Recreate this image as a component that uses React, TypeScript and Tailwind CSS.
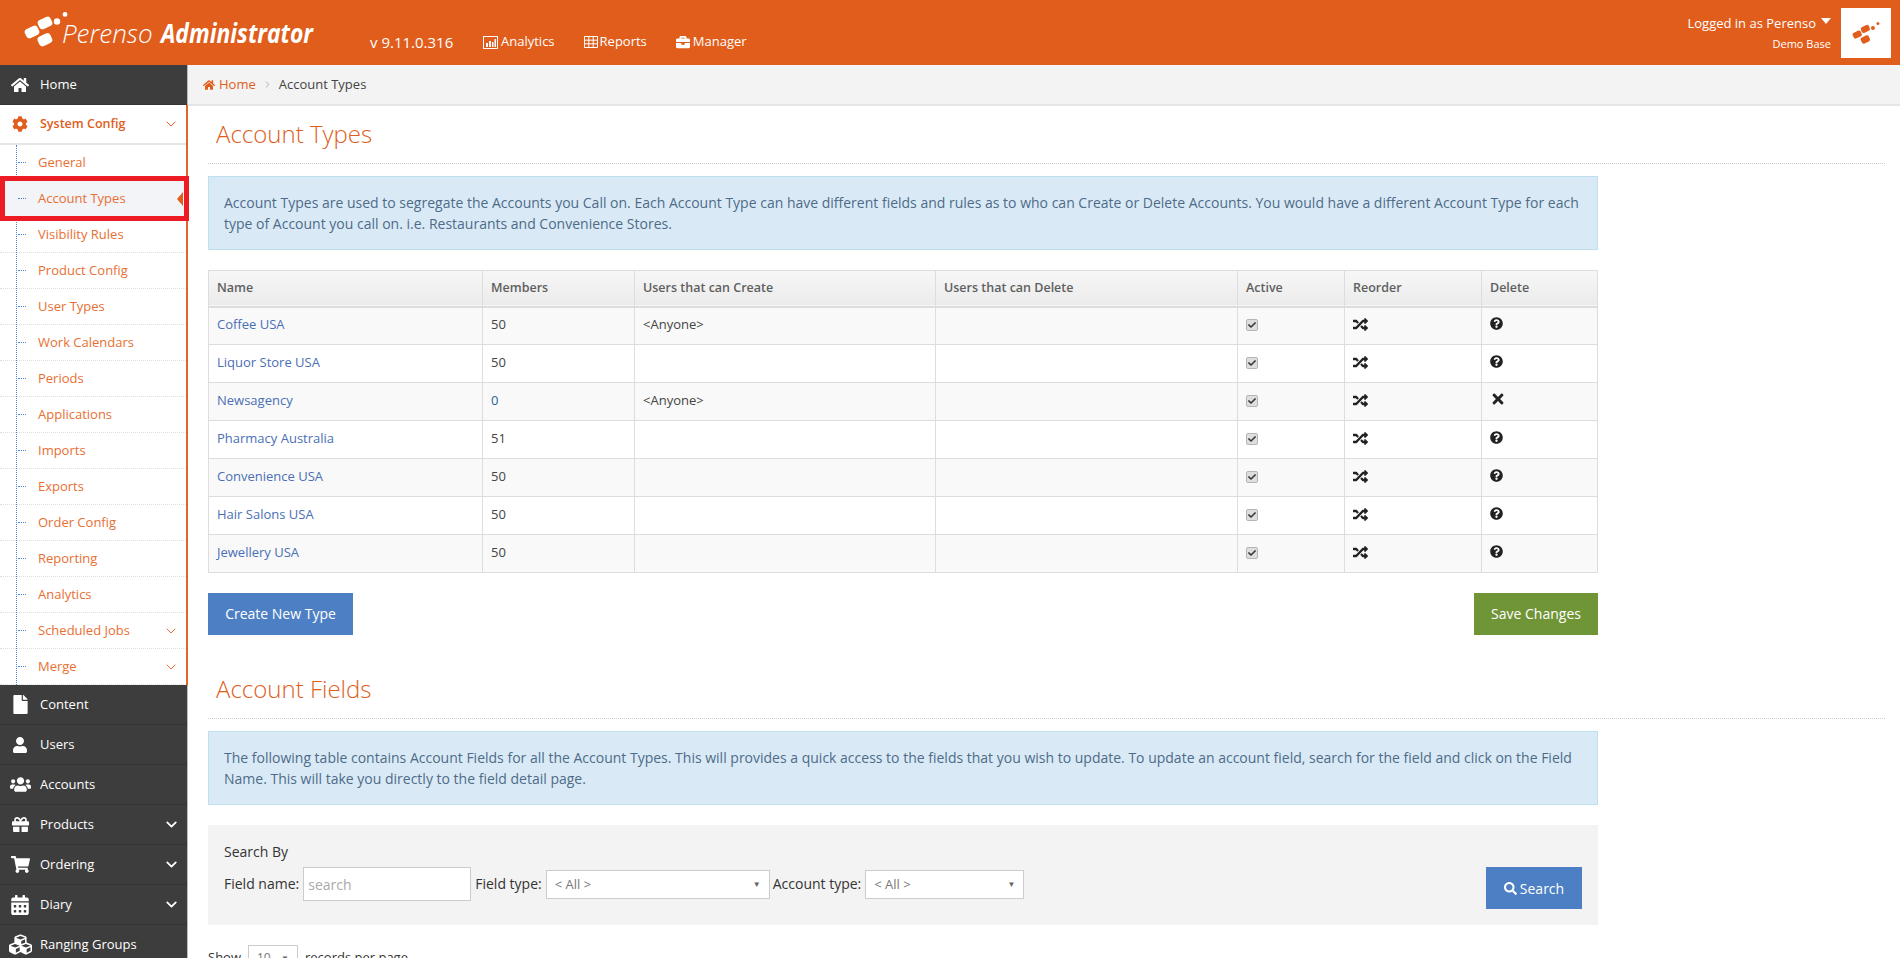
import { ChevronDown, ChevronRight } from "lucide-react";
import {
	FaBriefcase,
	FaCalendarAlt,
	FaCheck,
	FaCog,
	FaCubes,
	FaFile,
	FaGift,
	FaHome,
	FaQuestionCircle,
	FaRandom,
	FaSearch,
	FaShoppingCart,
	FaTimes,
	FaUser,
	FaUsers,
} from "react-icons/fa";

const subItems = [
	"General",
	"Account Types",
	"Visibility Rules",
	"Product Config",
	"User Types",
	"Work Calendars",
	"Periods",
	"Applications",
	"Imports",
	"Exports",
	"Order Config",
	"Reporting",
	"Analytics",
	"Scheduled Jobs",
	"Merge",
];

const darkItems = [
	{ label: "Content", icon: <FaFile size={19} />, more: false },
	{ label: "Users", icon: <FaUser size={16} />, more: false },
	{ label: "Accounts", icon: <FaUsers size={21} />, more: false },
	{ label: "Products", icon: <FaGift size={17} />, more: true },
	{ label: "Ordering", icon: <FaShoppingCart size={19} />, more: true },
	{ label: "Diary", icon: <FaCalendarAlt size={20} />, more: true },
	{ label: "Ranging Groups", icon: <FaCubes size={23} />, more: false },
];

const rows = [
	{ name: "Coffee USA", members: "50", create: "<Anyone>", canDelete: false },
	{ name: "Liquor Store USA", members: "50", create: "", canDelete: false },
	{ name: "Newsagency", members: "0", create: "<Anyone>", canDelete: true },
	{ name: "Pharmacy Australia", members: "51", create: "", canDelete: false },
	{ name: "Convenience USA", members: "50", create: "", canDelete: false },
	{ name: "Hair Salons USA", members: "50", create: "", canDelete: false },
	{ name: "Jewellery USA", members: "50", create: "", canDelete: false },
];

function LogoMark({ className }: { className: string }) {
	return (
		<svg viewBox="0 0 44 35" className={className} fill="currentColor">
			<rect x="1" y="15" width="14" height="10" rx="3.5" transform="rotate(-25 8 20)" />
			<rect x="14" y="6" width="14" height="10" rx="3.5" transform="rotate(-25 21 11)" />
			<rect x="14" y="22.5" width="14" height="10.5" rx="3.5" transform="rotate(-25 21 28)" />
			<circle cx="33" cy="9.5" r="3.2" />
			<circle cx="41" cy="2.4" r="2.4" />
		</svg>
	);
}

function ChartIcon() {
	return (
		<svg viewBox="0 0 15 13" className="h-[13px] w-[15px]" fill="none">
			<rect x="0.5" y="0.5" width="14" height="12" stroke="currentColor" />
			<path d="M3 7h2v4H3zM6 5h2v6H6zM9 6h1.5v5H9zM11.5 3H13v8h-1.5z" fill="currentColor" />
		</svg>
	);
}

function GridIcon() {
	return (
		<svg viewBox="0 0 14 12" className="h-[12px] w-[14px]" fill="none" stroke="currentColor">
			<path d="M.5.5h13v11H.5zM.5 4.2h13M.5 7.8h13M4.8.5v11M9.2.5v11" />
		</svg>
	);
}

function Select({ label, width }: { label: string; width: string }) {
	return (
		<div className={`flex h-[29px] items-center justify-between border border-[#ccc] bg-white pl-2 pr-2 text-[13px] text-[#777] ${width}`}>
			<span className="mt-[2px]">{label}</span>
			<span className="text-[8px] text-[#666]">▼</span>
		</div>
	);
}

function Header() {
	return (
		<header className="flex h-[65px] items-center bg-[#e05d1c] pl-6 pr-[9px] text-white">
			<LogoMark className="mt-[-6px] h-[35px] w-[44px] text-white" />
			<div className="ml-[-6px] flex h-[30px] w-[250px] items-center whitespace-nowrap text-[26px] italic leading-none">
				<span className="inline-block w-[99px] shrink-0 font-light">Perenso</span>
				<span className="inline-block shrink-0 origin-left scale-x-[0.88] font-bold">Administrator</span>
			</div>
			<div className="mt-[19px] ml-[58px] flex items-center">
				<span className="w-[113px] text-[15px]">v 9.11.0.316</span>
				<nav className="flex items-center gap-[29px] text-[13px]">
					<a className="flex items-center gap-[3px]">
						<ChartIcon />
						Analytics
					</a>
					<a className="flex items-center gap-[2px]">
						<GridIcon />
						Reports
					</a>
					<a className="flex items-center gap-[3px]">
						<FaBriefcase size={14} />
						Manager
					</a>
				</nav>
			</div>
			<div className="ml-auto flex items-center gap-[10px]">
				<div className="text-right">
					<div className="flex items-center justify-end gap-[5px] text-[13px] leading-[20px]">
						Logged in as Perenso
						<span className="mb-1 h-0 w-0 border-x-[5px] border-t-[6px] border-x-transparent border-t-white" />
					</div>
					<div className="mt-[2px] text-[11px] font-medium leading-[18px]">Demo Base</div>
				</div>
				<div className="flex h-[50px] w-[50px] items-center justify-center bg-white">
					<LogoMark className="h-[22px] w-[28px] text-[#e05d1c]" />
				</div>
			</div>
		</header>
	);
}

function Sidebar() {
	return (
		<aside className="w-[188px] shrink-0 border-r border-[#bbb] bg-[#3d3d3d] text-[13px]">
			<div className="flex h-10 items-center border-b border-[#333] text-white">
				<span className="flex w-10 justify-center">
					<FaHome size={18} />
				</span>
				<span>Home</span>
			</div>
			<div className="relative mr-[-1px] border-r-2 border-[#e2662a] bg-white">
				<div className="flex h-10 items-center border-b-2 border-[#e5e5e5] text-[12.5px] font-semibold text-[#e05d1c]">
					<span className="flex w-10 justify-center">
						<FaCog size={16} />
					</span>
					<span className="mt-[1px]">System Config</span>
					<ChevronDown size={16} className="ml-auto mr-[7px]" strokeWidth={1.5} />
				</div>
				<ul className="relative text-[#e86f33]">
					<span className="absolute inset-y-0 left-4 border-l border-dotted border-[#4a86c5]" />
					{subItems.map((item) => {
						const active = item === "Account Types";
						const more = item === "Scheduled Jobs" || item === "Merge";
						return (
							<li
								key={item}
								className={`relative flex h-9 items-center border-b border-dotted border-[#ddd] pl-[38px] ${active ? "bg-[#f3f4f8]" : ""}`}
							>
								<span className="absolute left-[18px] w-[8px] border-t border-dotted border-[#4a86c5]" />
								{item}
								{more && <ChevronDown size={16} className="ml-auto mr-[7px]" strokeWidth={1.5} />}
								{active && (
									<span className="absolute right-[3px] h-0 w-0 border-y-[7px] border-r-[6px] border-y-transparent border-r-[#e05d1c]" />
								)}
							</li>
						);
					})}
				</ul>
				<div className="pointer-events-none absolute left-0 top-[71px] h-[45px] w-[189px] border-[5px] border-[#ed1c24]" />
			</div>
			{darkItems.map((item) => (
				<div key={item.label} className="flex h-10 items-center border-b border-[#333] text-white">
					<span className="flex w-10 justify-center">{item.icon}</span>
					<span>{item.label}</span>
					{item.more && <ChevronDown size={17} className="ml-auto mr-[7px]" strokeWidth={2.5} />}
				</div>
			))}
		</aside>
	);
}

function AccountTypesTable() {
	const th = "border border-[#ddd] px-2 text-left text-[12.5px] font-semibold text-[#5f5f5f]";
	const td = "border border-[#ddd] px-2 pb-[2px] align-middle";
	return (
		<table className="w-[1390px] table-fixed border-collapse text-[13px] text-[#444]">
			<thead>
				<tr className="h-[36px] border-b-2 border-[#ddd] bg-gradient-to-b from-[#f7f7f7] to-[#ebebeb]">
					<th className={`${th} w-[274px]`}>Name</th>
					<th className={`${th} w-[152px]`}>Members</th>
					<th className={`${th} w-[301px]`}>Users that can Create</th>
					<th className={`${th} w-[302px]`}>Users that can Delete</th>
					<th className={`${th} w-[107px]`}>Active</th>
					<th className={`${th} w-[137px]`}>Reorder</th>
					<th className={th}>Delete</th>
				</tr>
			</thead>
			<tbody>
				{rows.map((row, i) => (
					<tr key={row.name} className={`h-[38px] ${i % 2 === 0 ? "bg-[#f9f9f9]" : "bg-white"}`}>
						<td className={`${td} text-[#4a6fb5]`}>{row.name}</td>
						<td className={`${td} ${row.members === "0" ? "text-[#2a6496]" : ""}`}>{row.members}</td>
						<td className={td}>{row.create}</td>
						<td className={td} />
						<td className={td}>
							<span className="flex h-[12px] w-[12px] items-center justify-center rounded-[2px] border border-[#b5b5b5] bg-[#dedede] text-[#333]">
								<FaCheck size={8} />
							</span>
						</td>
						<td className={`${td} text-[#222]`}>
							<FaRandom size={15} />
						</td>
						<td className={`${td} text-[#222]`}>
							<span className="mb-[3px] block">
								{row.canDelete ? <FaTimes size={16} /> : <FaQuestionCircle size={13} />}
							</span>
						</td>
					</tr>
				))}
			</tbody>
		</table>
	);
}

export default function App() {
	return (
		<div className="h-[958px] overflow-hidden bg-white font-['Open_Sans',sans-serif]">
			<Header />
			<div className="flex">
				<Sidebar />
				<main className="min-w-0 flex-1 text-[13px] text-[#333]">
					<div className="flex h-[41px] items-center gap-[6px] border-b-2 border-[#e5e5e5] bg-[#f3f3f3] pl-[15px]">
						<span className="flex items-center gap-1 text-[#e05d1c]">
							<FaHome size={12} />
							Home
						</span>
						<ChevronRight size={11} className="text-[#aaa]" />
						<span className="text-[#444]">Account Types</span>
					</div>
					<div className="pl-[20px] pr-[15px]">
						<h1 className="h-[58px] border-b border-dotted border-[#ccc] pl-2 pt-[11px] text-[24px] font-light leading-[34px] text-[#e05d1c]">
							Account Types
						</h1>
						<p className="mt-[12px] h-[74px] w-[1390px] border border-[#bce0ee] bg-[#d9eaf6] py-[15px] pl-[15px] pr-4 text-[14px] leading-[21px] text-[#4f6b88]">
							Account Types are used to segregate the Accounts you Call on. Each Account Type can have different fields and rules as to who can Create or Delete Accounts. You would have a different Account Type for each type of Account you call on. i.e. Restaurants and Convenience Stores.
						</p>
						<div className="mt-[20px]">
							<AccountTypesTable />
						</div>
						<div className="mt-[20px] flex w-[1390px] justify-between text-[14px] text-white">
							<button className="h-[42px] w-[145px] bg-[#4d7fc4] pb-[2px]">Create New Type</button>
							<button className="h-[42px] w-[124px] bg-[#6f9536] pb-[2px]">Save Changes</button>
						</div>
						<h2 className="mt-[32px] h-[52px] border-b border-dotted border-[#ccc] pl-2 pt-[5px] text-[24px] font-light leading-[34px] text-[#e05d1c]">
							Account Fields
						</h2>
						<p className="mt-[12px] h-[74px] w-[1390px] border border-[#bce0ee] bg-[#d9eaf6] py-[15px] pl-[15px] pr-4 text-[14px] leading-[21px] text-[#4f6b88]">
							The following table contains Account Fields for all the Account Types. This will provides a quick access to the fields that you wish to update. To update an account field, search for the field and click on the Field Name. This will take you directly to the field detail page.
						</p>
						<div className="mt-[20px] flex h-[100px] w-[1390px] justify-between bg-[#f3f3f3] px-4 text-[14px]">
							<div className="pt-[17px]">
								<div className="mb-[5px] leading-[20px]">Search By</div>
								<div className="flex items-center">
									<label className="mb-[2px] mr-[4px]">Field name:</label>
									<input
										readOnly
										placeholder="search"
										className="h-[34px] w-[168px] border border-[#ccc] bg-white px-1 text-[14px] placeholder:text-[#aaa]"
									/>
									<label className="mb-[2px] ml-[4px] mr-[4px]">Field type:</label>
									<Select label="< All >" width="w-[224px]" />
									<label className="mb-[2px] ml-[3px] mr-[4px]">Account type:</label>
									<Select label="< All >" width="w-[159px]" />
								</div>
							</div>
							<button className="mb-4 flex h-[42px] w-[96px] items-center justify-center gap-[3px] self-end bg-[#4d7fc4] text-white">
								<FaSearch size={13} />
								Search
							</button>
						</div>
						<div className="mt-[20px] flex items-center gap-[7px] text-[13px]">
							<span>Show</span>
							<div className="flex h-[26px] w-[50px] items-center justify-between border border-[#ccc] px-2 text-[12px] text-[#777]">
								<span>10</span>
								<span className="text-[8px] text-[#666]">▼</span>
							</div>
							<span>records per page</span>
						</div>
					</div>
				</main>
			</div>
		</div>
	);
}
